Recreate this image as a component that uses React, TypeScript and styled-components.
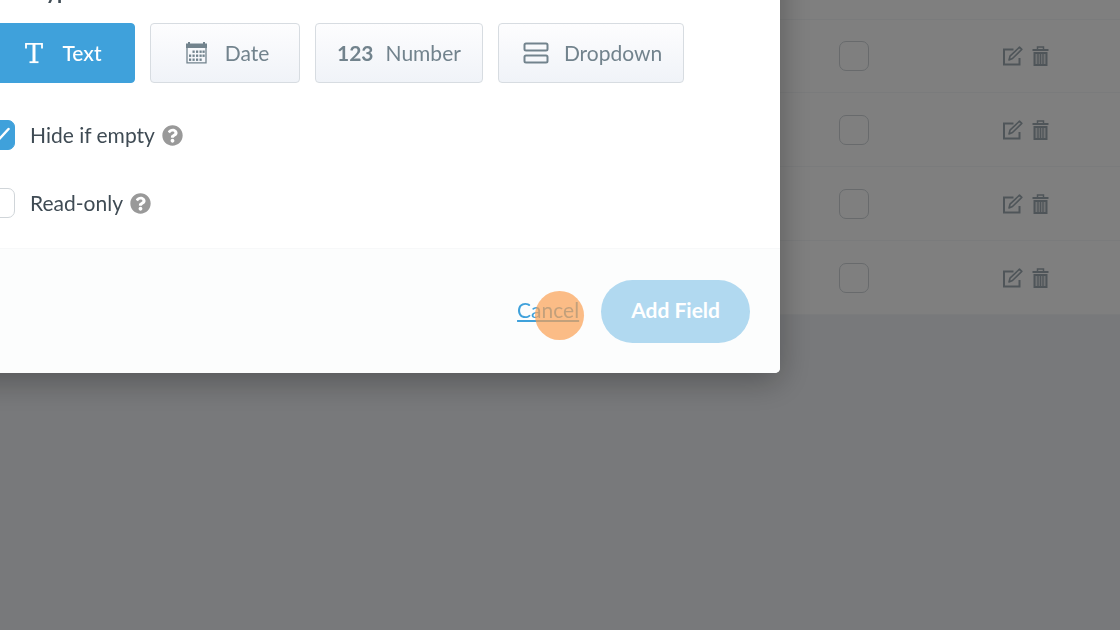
import React from "react";
import styled, { createGlobalStyle } from "styled-components";
import { FaQuestionCircle } from "react-icons/fa";

const GlobalStyle = createGlobalStyle`
  *, *::before, *::after { box-sizing: border-box; }
  body {
    margin: 0;
    background: #f1f3f7;
    color: #3f4b54;
    font-family: Lato, "Open Sans", sans-serif;
    font-size: 21px;
    line-height: 24px;
  }
  button, input { font: inherit; margin: 0; }
`;

const Page = styled.main`
  min-height: 100vh;
  overflow: hidden;
`;

const FieldsTable = styled.table`
  width: 100%;
  height: 315px;
  border-collapse: collapse;
  background: #ffffff;
`;

const Row = styled.tr<{ $partial?: boolean }>`
  height: ${(p) => (p.$partial ? "19px" : "auto")};
  border-bottom: 1px solid #f5f7f9;
`;

const Cell = styled.td<{ $width?: number }>`
  width: ${(p) => (p.$width ? `${p.$width}px` : "auto")};
  padding: 0;
  vertical-align: middle;
`;

const RowActions = styled.div`
  display: flex;
  gap: 9px;
`;

const IconButton = styled.button`
  display: flex;
  padding: 0;
  border: 0;
  background: none;
  color: #9eabb3;
`;

const CheckControl = styled.span`
  position: relative;
  display: flex;
  flex: none;
  width: 30px;
  height: 30px;

  svg {
    position: absolute;
    inset: 0;
    pointer-events: none;
  }
`;

const CheckInput = styled.input`
  appearance: none;
  width: 30px;
  height: 30px;
  border: 1px solid #d0d5d9;
  border-radius: 7px;
  background: #ffffff;

  &:checked {
    border-color: #3fa1db;
    background: #3fa1db;
  }
  &:not(:checked) + svg { display: none; }
`;

const Backdrop = styled.div`
  position: fixed;
  inset: 0;
  display: flex;
  align-items: flex-start;
  padding-right: 340px;
  overflow: hidden;
  background: rgba(0, 0, 0, 0.5);
`;

const Dialog = styled.section`
  flex: 1;
  margin: -51px 0 0 -45px;
  border-radius: 5px;
  background: #ffffff;
  box-shadow: 0 8px 32px rgba(0, 0, 0, 0.3);
`;

const DialogBody = styled.div`
  padding: 30px;
`;

const Heading = styled.h2`
  margin: 0 0 20px;
  font-size: 21px;
  line-height: 24px;
`;

const TypeList = styled.div`
  display: flex;
  gap: 15px;
  margin-bottom: 37px;
`;

const TypeButton = styled.button<{ $active?: boolean }>`
  display: flex;
  align-items: center;
  justify-content: center;
  gap: 12px;
  min-width: 150px;
  height: 60px;
  padding: 0 21px;
  border: 1px solid ${(p) => (p.$active ? "#3fa1db" : "#d7dce1")};
  border-radius: 4px;
  background: ${(p) => (p.$active ? "#3fa1db" : "linear-gradient(#fdfdfe, #f0f3f8)")};
  color: ${(p) => (p.$active ? "#ffffff" : "#72838d")};
  font-weight: ${(p) => (p.$active ? 500 : 400)};
`;

const TypeIcon = styled.span`
  display: flex;
  justify-content: center;
  min-width: 32px;
  font-weight: 700;
`;

const Option = styled.div`
  display: flex;
  align-items: center;
  gap: 7px;

  & + & { margin-top: 38px; }
`;

const OptionLabel = styled.label`
  display: flex;
  align-items: center;
  gap: 15px;
`;

const HelpButton = styled(IconButton)`
  color: #999999;
`;

const Footer = styled.footer`
  display: flex;
  align-items: center;
  justify-content: flex-end;
  gap: 22px;
  padding: 31px 30px 30px;
  border-top: 1px solid #f7f8f9;
  border-radius: 0 0 5px 5px;
  background: #fcfdfd;
`;

const CancelWrap = styled.span`
  position: relative;
  padding-bottom: 3px;
`;

const CancelLink = styled.a`
  color: #3fa1db;
  text-decoration: underline;
`;

const ClickMarker = styled.span`
  position: absolute;
  top: -7px;
  left: 18px;
  width: 49px;
  height: 49px;
  border-radius: 50%;
  background: rgba(251, 159, 82, 0.7);
  pointer-events: none;
`;

const SubmitButton = styled.button`
  height: 63px;
  padding: 0 30px 3px;
  border: 0;
  border-radius: 32px;
  background: #b1d9f0;
  color: #ffffff;
  font-weight: 700;
`;

const EditIcon = () => (
  <svg width="21" height="22" viewBox="0 0 21 22" fill="none" stroke="currentColor" aria-hidden="true">
    <path d="M11.500 4.500H2v15h15.500V13" strokeWidth="2" />
    <path d="M7 15l1-3.800L17.500 2.200l2.300 2.200L10.500 13.500z" strokeWidth="1.600" strokeLinejoin="round" />
  </svg>
);

const TrashIcon = () => (
  <svg width="17" height="22" viewBox="0 0 17 22" fill="none" stroke="currentColor" aria-hidden="true">
    <path d="M5.500 4V2h6v2" strokeWidth="1.500" />
    <path d="M0.500 5h16" strokeWidth="2" />
    <path d="M2.500 8v12h12V8z" strokeWidth="2" fill="currentColor" fillOpacity="0.3" />
    <path d="M6 9v10M8.500 9v10M11 9v10" strokeWidth="1.300" />
  </svg>
);

const TextIcon = () => (
  <svg width="20" height="22" viewBox="0 0 20 22" fill="none" stroke="currentColor" aria-hidden="true">
    <path d="M2 6.500V1.800h16v4.700" strokeWidth="1.800" />
    <path d="M10 2v18" strokeWidth="3" />
    <path d="M5.500 20.200h9" strokeWidth="1.800" />
  </svg>
);

const CalendarIcon = () => (
  <svg width="21" height="22" viewBox="0 0 21 22" fill="currentColor" aria-hidden="true">
    <path d="M0 1.500h2V0h2v1.500h13V0h2v1.500h2V6H0z" />
    <path d="M1 6v14.800h19V6" fill="none" stroke="currentColor" strokeWidth="1.300" />
    {[
      [7, 9], [10.5, 9], [14, 9], [17, 9],
      [3.5, 13], [7, 13], [10.5, 13], [14, 13], [17, 13],
      [3.5, 17], [7, 17], [10.5, 17], [14, 17],
    ].map(([x, y]) => (
      <rect key={`${x}-${y}`} x={x - 0.5} y={y - 0.5} width="2.200" height="2.400" />
    ))}
  </svg>
);

const DropdownIcon = () => (
  <svg width="26" height="22" viewBox="0 0 26 22" fill="none" stroke="currentColor" strokeWidth="2" aria-hidden="true">
    <rect x="1.500" y="1.500" width="23" height="7" rx="1.500" />
    <rect x="1.500" y="13.500" width="23" height="7" rx="1.500" />
  </svg>
);

const CheckBox = (props: React.InputHTMLAttributes<HTMLInputElement>) => (
  <CheckControl>
    <CheckInput type="checkbox" {...props} />
    <svg width="30" height="30" viewBox="0 0 30 30" fill="none" stroke="#ffffff" strokeWidth="2.500" strokeLinecap="round" aria-hidden="true">
      <path d="M7 16.500l5 5L23.500 9" />
    </svg>
  </CheckControl>
);

const fieldTypes = [
  { name: "Text", icon: <TextIcon />, active: true },
  { name: "Date", icon: <CalendarIcon /> },
  { name: "Number", icon: "123" },
  { name: "Dropdown", icon: <DropdownIcon /> },
];

const options = [
  { id: "hide-if-empty", label: "Hide if empty", checked: true },
  { id: "read-only", label: "Read-only", checked: false },
];

export default function App() {
  return (
    <Page>
      <GlobalStyle />
      <FieldsTable>
        <tbody>
          <Row $partial>
            <Cell colSpan={3} />
          </Row>
          {[1, 2, 3, 4].map((n) => (
            <Row key={n}>
              <Cell />
              <Cell $width={163}>
                <CheckBox aria-label={`Select field ${n}`} />
              </Cell>
              <Cell $width={118}>
                <RowActions>
                  <IconButton aria-label="Edit"><EditIcon /></IconButton>
                  <IconButton aria-label="Delete"><TrashIcon /></IconButton>
                </RowActions>
              </Cell>
            </Row>
          ))}
        </tbody>
      </FieldsTable>

      <Backdrop>
        <Dialog role="dialog" aria-modal="true" aria-labelledby="type-heading">
          <DialogBody>
            <Heading id="type-heading">Field Type</Heading>
            <TypeList>
              {fieldTypes.map((t) => (
                <TypeButton key={t.name} type="button" $active={t.active} aria-pressed={!!t.active}>
                  <TypeIcon>{t.icon}</TypeIcon>
                  {t.name}
                </TypeButton>
              ))}
            </TypeList>
            {options.map((o) => (
              <Option key={o.id}>
                <OptionLabel htmlFor={o.id}>
                  <CheckBox id={o.id} defaultChecked={o.checked} />
                  {o.label}
                </OptionLabel>
                <HelpButton type="button" aria-label={`About ${o.label}`}>
                  <FaQuestionCircle size={21} />
                </HelpButton>
              </Option>
            ))}
          </DialogBody>
          <Footer>
            <CancelWrap>
              <CancelLink href="#cancel">Cancel</CancelLink>
              <ClickMarker />
            </CancelWrap>
            <SubmitButton type="button">Add Field</SubmitButton>
          </Footer>
        </Dialog>
      </Backdrop>
    </Page>
  );
}
